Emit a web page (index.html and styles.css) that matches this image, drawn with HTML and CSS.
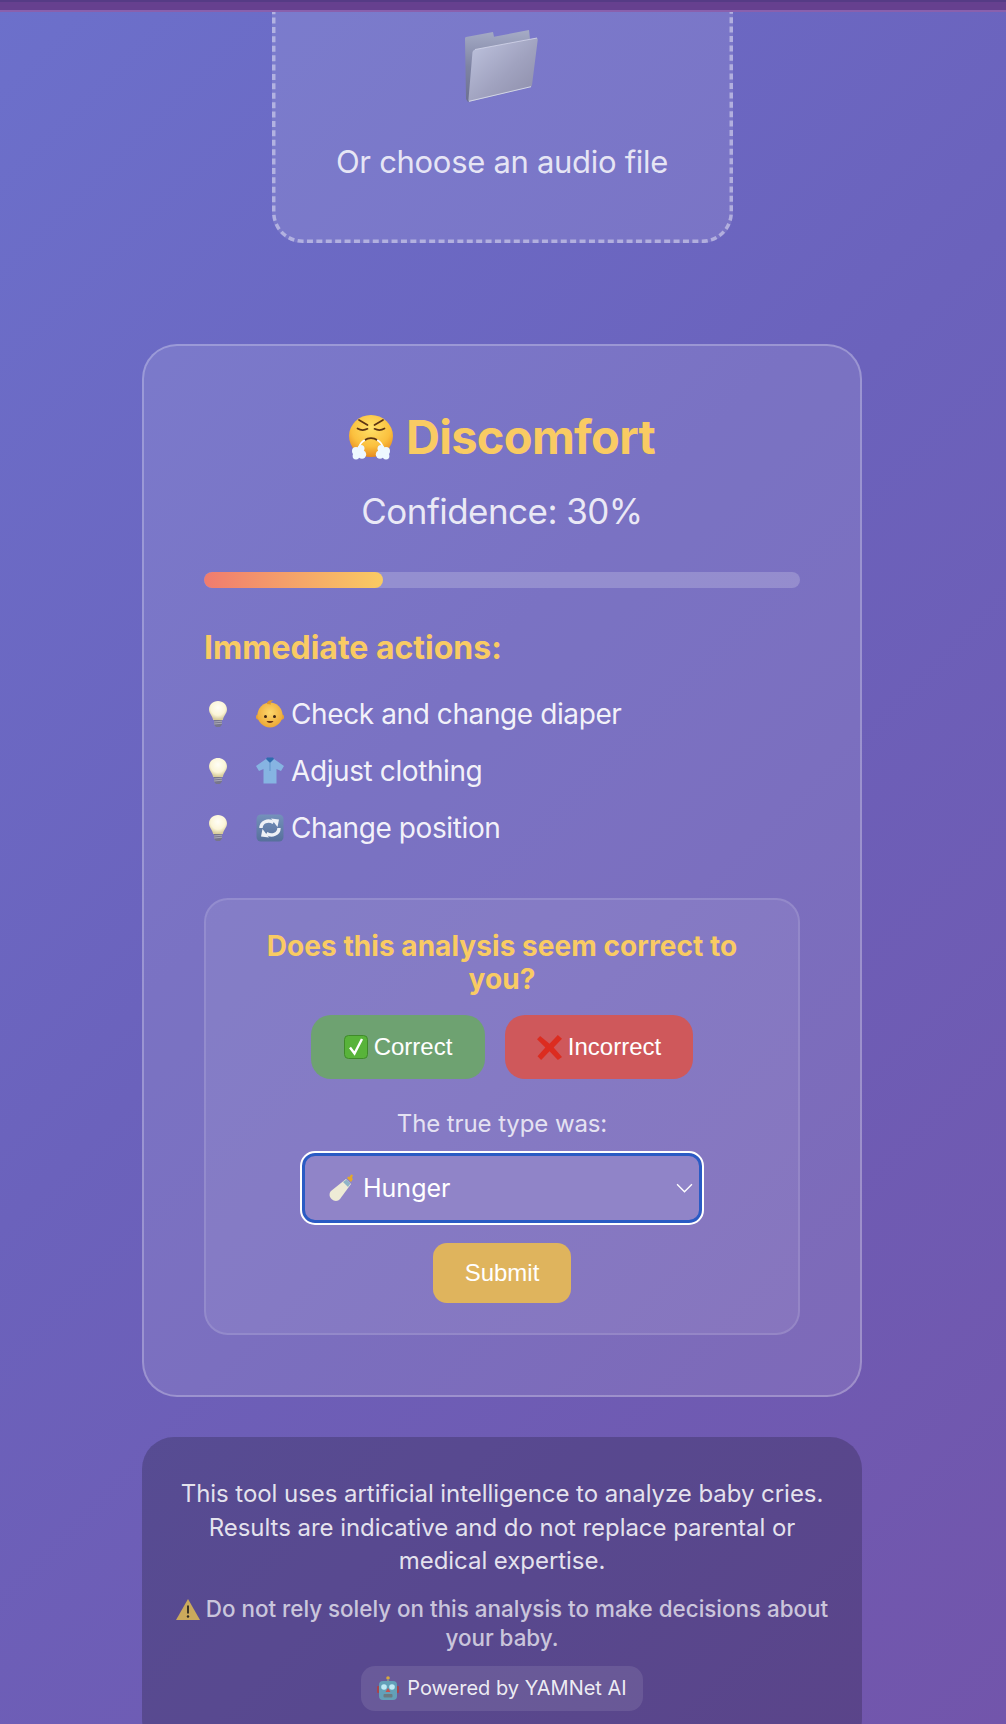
FILE: index.html
```html
<!DOCTYPE html>
<html lang="en">
<head>
<meta charset="utf-8">
<title>Baby cry analyzer</title>
<link rel="stylesheet" href="styles.css">
</head>
<body>
<svg class="defs" width="0" height="0" aria-hidden="true">
  <defs>
    <radialGradient id="bulbGlass" cx="50%" cy="35%" r="62%">
      <stop offset="0" stop-color="#fffef6"/><stop offset=".65" stop-color="#fbf5d8"/><stop offset="1" stop-color="#d8cd9c"/>
    </radialGradient>
    <symbol id="bulb" viewBox="0 0 20 28">
      <path d="M10 1C4.800 1 1 4.800 1 9.600c0 3.800 3.200 6.200 4.200 10.400h9.600C15.800 15.800 19 13.400 19 9.600 19 4.800 15.200 1 10 1z" fill="url(#bulbGlass)"/>
      <path d="M6 20h8v4.500l-2 2.500H8l-2-2.500z" fill="#77768c"/>
      <path d="M6 22l8-.8M6 24l8-.8" stroke="#b6b5c4" stroke-width=".8"/>
    </symbol>
  </defs>
</svg>

<div class="topbar"></div>

<main class="page">
  <section class="upload">
    <svg class="upload-border" width="461" height="231" aria-hidden="true">
      <rect x="1.750" y="-30" width="457.500" height="259.250" rx="29" fill="none" stroke="#fff" stroke-opacity=".42" stroke-width="3.500" stroke-dasharray="6 3.400"/>
    </svg>
    <svg class="folder" viewBox="0 0 74 73" aria-hidden="true">
      <defs>
        <linearGradient id="folderFront" x1="0" y1="0" x2="1" y2="1">
          <stop offset="0" stop-color="#c0c5e0"/><stop offset=".55" stop-color="#a0a2bf"/><stop offset="1" stop-color="#8c8ca8"/>
        </linearGradient>
        <linearGradient id="folderBack" x1="0" y1="0" x2="0" y2="1">
          <stop offset="0" stop-color="#a6acc6"/><stop offset=".5" stop-color="#7f84a4"/><stop offset="1" stop-color="#6c7091"/>
        </linearGradient>
      </defs>
      <path d="M0 8.500Q0 7 1 7L28 2 29 6.700 64 0 65 9 9 20 5.500 70 3 72 1 69z" fill="url(#folderBack)"/>
      <path d="M10 19.500 71 8Q73 7.700 72.700 10L67 55Q66.800 56.500 65.500 57L5 71.500Q3 72 3.500 69L7.500 22Q8 20 10 19.500z" fill="url(#folderFront)"/>
      <path d="M4 71.300 66 56.700" stroke="#d2d5e6" stroke-width="1" fill="none"/>
      <path d="M10 19.500 72 8" stroke="#d5d8ea" stroke-width=".8" fill="none"/>
    </svg>
    <p class="upload-label">Or choose an audio file</p>
  </section>

  <section class="card">
    <h2 class="result-title">
      <svg class="face" viewBox="0 0 44 45" aria-hidden="true">
        <defs>
          <radialGradient id="faceFill" cx="50%" cy="30%" r="72%">
            <stop offset="0" stop-color="#ffe168"/><stop offset=".62" stop-color="#fbc03e"/><stop offset="1" stop-color="#e5861c"/>
          </radialGradient>
        </defs>
        <ellipse cx="22" cy="21" rx="22" ry="21" fill="url(#faceFill)"/>
        <g fill="none" stroke="#5c3413" stroke-width="1.700" stroke-linecap="round">
          <path d="M10 5 18.500 10M34 5 25.500 10"/>
          <path d="M8.500 13.500c3 1.800 7 1.800 10 .3M35.500 13.500c-3 1.800-7 1.800-10 .3"/>
          <path d="M16 25c3-2.500 9-2.500 12 0"/>
        </g>
        <path d="M16 25c-3 1.500-5 4-6 7M28 25c3 1.500 5 4 6 7" stroke="#fff" stroke-width="1.600" fill="none"/>
        <g fill="#eef8ff">
          <circle cx="7" cy="36" r="4"/><circle cx="12" cy="33.500" r="3.500"/><circle cx="13" cy="39.500" r="4.200"/><circle cx="7" cy="41" r="3.400"/>
          <circle cx="37" cy="36" r="4"/><circle cx="32" cy="33.500" r="3.500"/><circle cx="31" cy="39.500" r="4.200"/><circle cx="37" cy="41" r="3.400"/>
        </g>
      </svg>
      <span>Discomfort</span>
    </h2>
    <p class="confidence">Confidence: 30%</p>
    <div class="meter"><div class="meter-fill" style="width: 30%"></div></div>

    <h3 class="actions-title">Immediate actions:</h3>
    <ul class="actions">
      <li class="action">
        <svg class="bulb" aria-hidden="true"><use href="#bulb"/></svg>
        <svg class="action-emoji" viewBox="0 0 28 28" aria-hidden="true">
          <defs>
            <radialGradient id="babySkin" cx="50%" cy="40%" r="60%">
              <stop offset="0" stop-color="#fdd76c"/><stop offset="1" stop-color="#eda835"/>
            </radialGradient>
          </defs>
          <circle cx="2.800" cy="17" r="2.800" fill="#e9a136"/><circle cx="25.200" cy="17" r="2.800" fill="#e9a136"/>
          <circle cx="14" cy="15" r="12.500" fill="url(#babySkin)"/>
          <path d="M11 4c-.5-3 4-5 7-3-2.500 0-4 1-3 3.500z" fill="#e0982a"/>
          <circle cx="9.500" cy="16.500" r="1.500" fill="#3c2414"/><circle cx="18.500" cy="16.500" r="1.500" fill="#3c2414"/>
          <path d="M10.500 21h7c-1 2.500-6 2.500-7 0z" fill="#6a3414"/>
        </svg>
        <span>Check and change diaper</span>
      </li>
      <li class="action">
        <svg class="bulb" aria-hidden="true"><use href="#bulb"/></svg>
        <svg class="action-emoji" viewBox="0 0 28 28" aria-hidden="true">
          <path d="M10 2 0 9l3 5 4.500-2v14.500h13V12l4.500 2 3-5-10-7z" fill="#86b4e2"/>
          <path d="M10 2l4 4 4-4-1-1.500h-6z" fill="#2f6cae"/>
          <path d="M14 6v8" stroke="#5f93c9" stroke-width="1"/>
        </svg>
        <span>Adjust clothing</span>
      </li>
      <li class="action">
        <svg class="bulb" aria-hidden="true"><use href="#bulb"/></svg>
        <svg class="action-emoji" viewBox="0 0 28 28" aria-hidden="true">
          <defs>
            <linearGradient id="refreshBg" x1="0" y1="0" x2="0" y2="1">
              <stop offset="0" stop-color="#7491bb"/><stop offset="1" stop-color="#566f9b"/>
            </linearGradient>
          </defs>
          <rect x=".5" y=".5" width="27" height="27" rx="4.500" fill="url(#refreshBg)"/>
          <g fill="none" stroke="#eef1f6" stroke-width="3.400">
            <path d="M5 14c0-6 7-9 12.500-5.500"/>
            <path d="M23 14c0 6-7 9-12.500 5.500"/>
          </g>
          <path d="M15 4.500l8 1-1.500 7.500zM13 23.500l-8-1 1.500-7.500z" fill="#eef1f6"/>
        </svg>
        <span>Change position</span>
      </li>
    </ul>

    <section class="feedback">
      <h4 class="feedback-title">Does this analysis seem correct to you?</h4>
      <div class="feedback-buttons">
        <button class="btn btn-correct" type="button">
          <svg class="btn-icon" viewBox="0 0 24 24" aria-hidden="true">
            <rect x=".5" y=".5" width="23" height="23" rx="4" fill="#58b33a" stroke="#3f8a2a"/>
            <path d="M6 12.500l4.500 6L18 4" fill="none" stroke="#fff" stroke-width="2.400"/>
          </svg>
          <span>Correct</span>
        </button>
        <button class="btn btn-incorrect" type="button">
          <svg class="btn-icon btn-icon-wide" viewBox="0 0 24 24" aria-hidden="true">
            <path d="M3 1l9 7.500L20 0l4 3.500-8 8.500 8 9-4 3-8-8.500L4 24l-3.500-3.500L8 12 0 4z" fill="#dc2c20"/>
          </svg>
          <span>Incorrect</span>
        </button>
      </div>
      <p class="true-label">The true type was:</p>
      <div class="select" role="combobox" aria-expanded="false" tabindex="0">
        <svg class="bottle" viewBox="0 0 26 28" aria-hidden="true">
          <path d="M17 5l5 5-11 15c-2 2.500-6 2.500-8.500 0S0 19 2 17z" fill="#eeebd6"/>
          <path d="M14 8l5 5 2.500-3.500-4-4z" fill="#8fb4c8"/>
          <path d="M18 4l4 4 2-3-1-1 1-3-2-.5-1.500 2.500-1-.5z" fill="#e3a82c"/>
        </svg>
        <span>Hunger</span>
        <svg class="chevron" viewBox="0 0 16 9" aria-hidden="true">
          <path d="M1 1l7 7 7-7" fill="none" stroke="#fff" stroke-width="1.300"/>
        </svg>
      </div>
      <button class="btn btn-submit" type="button">Submit</button>
    </section>
  </section>

  <footer class="disclaimer">
    <p class="disclaimer-main">This tool uses artificial intelligence to analyze baby cries. Results are indicative and do not replace parental or medical expertise.</p>
    <p class="disclaimer-warn">
      <svg class="warn-icon" viewBox="0 0 24 21" aria-hidden="true">
        <path d="M12 0 24 21H0z" fill="#cba95c"/>
        <path d="M12 6.500v8" stroke="#2c2620" stroke-width="1.800"/>
        <circle cx="12" cy="17.500" r="1.200" fill="#2c2620"/>
      </svg>
      Do not rely solely on this analysis to make decisions about your baby.
    </p>
    <div class="powered">
      <svg class="robot" viewBox="0 0 22 24" aria-hidden="true">
        <circle cx="11" cy="2" r="1.800" fill="#d8a83c"/>
        <rect x="10" y="3" width="2" height="3" fill="#8a8a8a"/>
        <rect x="0" y="10" width="3" height="7" rx="1" fill="#a8434c"/><rect x="19" y="10" width="3" height="7" rx="1" fill="#a8434c"/>
        <rect x="2" y="5" width="18" height="19" rx="4" fill="#63a0b8"/>
        <circle cx="7" cy="11" r="2.800" fill="#bfeaf5"/><circle cx="15" cy="11" r="2.800" fill="#bfeaf5"/>
        <path d="M11 12l2.500 4h-5z" fill="#c8504c"/>
        <rect x="6.500" y="18" width="9" height="3.500" rx="1" fill="#6c7a80"/>
      </svg>
      <span>Powered by YAMNet AI</span>
    </div>
  </footer>
</main>
</body>
</html>
```

FILE: styles.css
```css
* {
  box-sizing: border-box;
}

html,
body {
  margin: 0;
  padding: 0;
}

body {
  height: 1724px;
  overflow: hidden;
  font-family: "Inter", "Liberation Sans", sans-serif;
  color: #fff;
  background: linear-gradient(135deg, #6c70cb 0%, #6b62bc 45%, #7255ab 100%);
}

.defs {
  display: block;
  height: 0;
}

.topbar {
  height: 12px;
  background: #66408f;
  border-top: 2px solid #553b85;
  border-bottom: 2px solid #8a60ad;
}

.page {
  display: flex;
  flex-direction: column;
  align-items: center;
  padding-right: 2px;
}

.upload {
  position: relative;
  width: 461px;
  height: 231px;
  padding-top: 18px;
  display: flex;
  flex-direction: column;
  align-items: center;
  background: rgba(255, 255, 255, 0.1);
  border-radius: 0 0 30px 30px;
}

.upload-border {
  position: absolute;
  top: 0;
  left: 0;
}

.folder {
  width: 74px;
  height: 73px;
}

.upload-label {
  margin: 39px 0 0;
  font-size: 31px;
  line-height: 40px;
  letter-spacing: -0.3px;
  color: rgba(255, 255, 255, 0.82);
}

.card {
  width: 720px;
  height: 1053px;
  margin-top: 101px;
  padding: 64px 60px 0;
  background: rgba(255, 255, 255, 0.1);
  border: 2px solid rgba(255, 255, 255, 0.25);
  border-radius: 35px;
}

.result-title {
  display: flex;
  justify-content: center;
  align-items: center;
  gap: 13px;
  margin: 0;
  font-size: 47px;
  line-height: 54px;
  letter-spacing: -0.7px;
  font-weight: 700;
  color: #f9cb63;
}

.face {
  width: 44px;
  height: 45px;
}

.confidence {
  margin: 25px 0 0;
  text-align: center;
  font-size: 35px;
  line-height: 44px;
  letter-spacing: -0.55px;
  color: rgba(255, 255, 255, 0.85);
}

.meter {
  height: 16px;
  margin-top: 39px;
  border-radius: 8px;
  background: rgba(255, 255, 255, 0.2);
  overflow: hidden;
}

.meter-fill {
  height: 100%;
  border-radius: 8px;
  background: linear-gradient(90deg, #f07b6e, #f9cb63);
}

.actions-title {
  margin: 40px 0 0;
  font-size: 32px;
  line-height: 40px;
  font-weight: 700;
  color: #f9cb63;
}

.actions {
  list-style: none;
  margin: 17px 0 0;
  padding: 0;
}

.action {
  display: flex;
  align-items: center;
  height: 57px;
  font-size: 28px;
  letter-spacing: -0.4px;
  color: rgba(255, 255, 255, 0.92);
}

.bulb {
  width: 20px;
  height: 28px;
  margin: 0 28px 0 4px;
}

.action-emoji {
  width: 28px;
  height: 28px;
  margin-right: 7px;
}

.feedback {
  display: flex;
  flex-direction: column;
  align-items: center;
  height: 437px;
  margin-top: 42px;
  padding: 30px 30px 0;
  background: rgba(255, 255, 255, 0.08);
  border: 2px solid rgba(255, 255, 255, 0.12);
  border-radius: 24px;
}

.feedback-title {
  margin: 0;
  width: 500px;
  text-align: center;
  font-size: 28px;
  line-height: 33px;
  letter-spacing: 0.05px;
  font-weight: 700;
  color: #f9cb63;
}

.feedback-buttons {
  display: flex;
  gap: 20px;
  margin-top: 19px;
}

.btn {
  display: flex;
  align-items: center;
  justify-content: center;
  border: none;
  color: #fff;
  font-family: "Liberation Sans", Arial, sans-serif;
  font-size: 24px;
}

.btn-correct,
.btn-incorrect {
  height: 64px;
  gap: 6px;
  border-radius: 20px;
}

.btn-correct {
  width: 174px;
  background: #6ea271;
}

.btn-incorrect {
  width: 188px;
  background: #cf585b;
}

.btn-icon {
  width: 24px;
  height: 24px;
}

.btn-icon-wide {
  width: 25px;
  height: 25px;
}

.true-label {
  margin: 27px 0 0;
  font-size: 24px;
  line-height: 36px;
  letter-spacing: -0.1px;
  color: rgba(255, 255, 255, 0.8);
}

.select {
  display: flex;
  align-items: center;
  width: 400px;
  height: 70px;
  margin-top: 11px;
  padding: 0 6px 0 24px;
  border: 3px solid #2a5bc4;
  outline: 2px solid #fff;
  outline-offset: 0;
  border-radius: 13px;
  background: #9084c8;
  font-size: 25px;
  color: #fff;
}

.bottle {
  width: 26px;
  height: 28px;
  margin-right: 8px;
}

.chevron {
  width: 17px;
  height: 10px;
  margin-left: auto;
}

.btn-submit {
  width: 138px;
  height: 60px;
  margin-top: 20px;
  border-radius: 14px;
  background: #dfb45d;
}

.disclaimer {
  width: 720px;
  margin-top: 40px;
  padding: 40px 32px 40px;
  text-align: center;
  background: rgba(0, 0, 0, 0.2);
  border-radius: 32px;
}

.disclaimer-main {
  margin: 0;
  font-size: 24px;
  line-height: 33.500px;
  letter-spacing: -0.05px;
  color: rgba(255, 255, 255, 0.85);
}

.disclaimer-warn {
  margin: 16px 0 0;
  font-size: 22.400px;
  line-height: 29px;
  font-weight: 500;
  color: rgba(255, 255, 255, 0.7);
}

.warn-icon {
  width: 24px;
  height: 21px;
  vertical-align: -3px;
}

.powered {
  display: inline-flex;
  align-items: center;
  gap: 8px;
  height: 45px;
  margin-top: 14px;
  padding: 0 16px;
  border-radius: 14px;
  background: rgba(255, 255, 255, 0.1);
  font-size: 20px;
  color: rgba(255, 255, 255, 0.9);
}

.robot {
  width: 22px;
  height: 24px;
}
```
